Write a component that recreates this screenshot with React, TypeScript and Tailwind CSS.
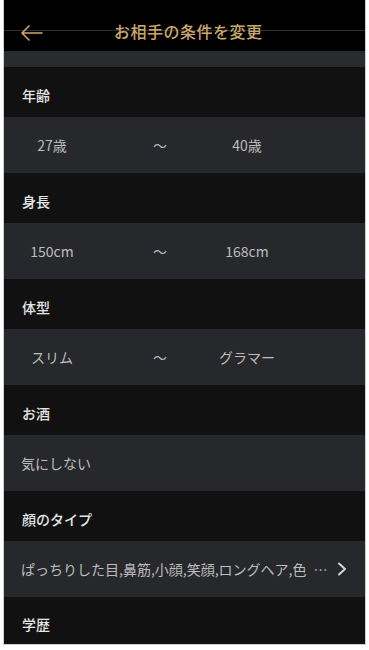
const font = { fontFamily: '"Noto Sans CJK JP", "Noto Sans", sans-serif' }

function Label({ children }: { children: React.ReactNode }) {
  return (
    <div className="flex h-[50px] items-center bg-[#111111] pl-[18px] pt-[6px] text-[14px] font-medium text-[#e6e6e6]">
      {children}
    </div>
  )
}

function Range({ from, to }: { from: string; to: string }) {
  return (
    <div className="flex h-[56px] items-center bg-[#27282b] pl-[12px] text-[14px] text-[#bdbdbd]">
      <span className="w-[72px] text-center">{from}</span>
      <span className="ml-[52px] w-[40px] text-center">～</span>
      <span className="ml-[17px] w-[100px] text-center">{to}</span>
    </div>
  )
}

function Value({ children, arrow }: { children: React.ReactNode; arrow?: boolean }) {
  return (
    <div className="flex h-[56px] items-center bg-[#27282b] pl-[17px] pr-[18px] text-[14px] text-[#bdbdbd]">
      <span className="flex-1 whitespace-nowrap">{children}</span>
      {arrow && (
        <svg width="10" height="14" viewBox="0 0 10 14" className="ml-[8px]">
          <polyline points="2,1.5 8,7 2,12.5" fill="none" stroke="#d6d6d6" strokeWidth="2" strokeLinecap="round" strokeLinejoin="round" />
        </svg>
      )}
    </div>
  )
}

export default function App() {
  return (
    <div className="min-h-[650px] bg-white" style={font}>
      <div className="ml-[3px] w-[363px] border-x border-b border-[#cfcfcf]">
        {/* Header */}
        <div className="relative flex h-[51px] items-end bg-black pb-[8px]">
          <div className="absolute left-0 right-0 top-[30px] h-px bg-[#2e2e2e]" />
          <svg width="24" height="16" viewBox="0 0 24 16" className="relative ml-[16px] mb-[2px]">
            <path d="M22 8H2M9 1L2 8l7 7" fill="none" stroke="#c9a96c" strokeWidth="1.6" strokeLinecap="round" strokeLinejoin="round" />
          </svg>
          <h1 className="relative ml-[70px] text-[16px] font-medium tracking-[0.5px] text-[#c9a96c]">
            お相手の条件を変更
          </h1>
        </div>
        <div className="h-[16px] bg-[#2a2b2e]" />

        <Label>年齢</Label>
        <Range from="27歳" to="40歳" />
        <Label>身長</Label>
        <Range from="150cm" to="168cm" />
        <Label>体型</Label>
        <Range from="スリム" to="グラマー" />
        <Label>お酒</Label>
        <Value>気にしない</Value>
        <Label>顔のタイプ</Label>
        <Value arrow>
          ぱっちりした目,鼻筋,小顔,笑顔,ロングヘア,色 <span className="ml-[4px]">…</span>
        </Value>
        <div className="flex h-[47px] items-center bg-[#111111] pl-[18px] pt-[8px] text-[14px] font-medium text-[#e6e6e6]">
          学歴
        </div>
      </div>
    </div>
  )
}
